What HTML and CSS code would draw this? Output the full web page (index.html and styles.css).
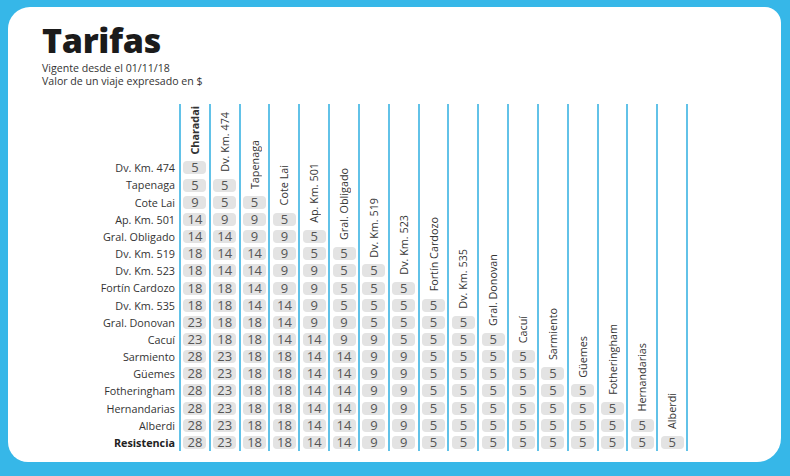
FILE: index.html
```html
<!DOCTYPE html>
<html lang="es">
<head>
<meta charset="utf-8">
<title>Tarifas</title>
<link rel="stylesheet" href="styles.css">
</head>
<body>
<div class="card">
  <h1 class="title">Tarifas</h1>
  <p class="sub">Vigente desde el 01/11/18<br>Valor de un viaje expresado en $</p>
  <div class="table">
    <div class="labels">
      <div class="lab">Dv. Km. 474</div>
      <div class="lab">Tapenaga</div>
      <div class="lab">Cote Lai</div>
      <div class="lab">Ap. Km. 501</div>
      <div class="lab">Gral. Obligado</div>
      <div class="lab">Dv. Km. 519</div>
      <div class="lab">Dv. Km. 523</div>
      <div class="lab">Fortín Cardozo</div>
      <div class="lab">Dv. Km. 535</div>
      <div class="lab">Gral. Donovan</div>
      <div class="lab">Cacuí</div>
      <div class="lab">Sarmiento</div>
      <div class="lab">Güemes</div>
      <div class="lab">Fotheringham</div>
      <div class="lab">Hernandarias</div>
      <div class="lab">Alberdi</div>
      <div class="lab bold">Resistencia</div>
    </div>
    <div class="col"><div class="head"><span class="bold">Charadai</span></div>
      <div class="c"><span>5</span></div><div class="c"><span>5</span></div><div class="c"><span>9</span></div><div class="c"><span>14</span></div><div class="c"><span>14</span></div><div class="c"><span>18</span></div><div class="c"><span>18</span></div><div class="c"><span>18</span></div><div class="c"><span>18</span></div><div class="c"><span>23</span></div><div class="c"><span>23</span></div><div class="c"><span>28</span></div><div class="c"><span>28</span></div><div class="c"><span>28</span></div><div class="c"><span>28</span></div><div class="c"><span>28</span></div><div class="c"><span>28</span></div>
    </div>
    <div class="col"><div class="head"><span>Dv. Km. 474</span></div>
      <div class="c"><span>5</span></div><div class="c"><span>5</span></div><div class="c"><span>9</span></div><div class="c"><span>14</span></div><div class="c"><span>14</span></div><div class="c"><span>14</span></div><div class="c"><span>18</span></div><div class="c"><span>18</span></div><div class="c"><span>18</span></div><div class="c"><span>18</span></div><div class="c"><span>23</span></div><div class="c"><span>23</span></div><div class="c"><span>23</span></div><div class="c"><span>23</span></div><div class="c"><span>23</span></div><div class="c"><span>23</span></div>
    </div>
    <div class="col"><div class="head"><span>Tapenaga</span></div>
      <div class="c"><span>5</span></div><div class="c"><span>9</span></div><div class="c"><span>9</span></div><div class="c"><span>14</span></div><div class="c"><span>14</span></div><div class="c"><span>14</span></div><div class="c"><span>14</span></div><div class="c"><span>18</span></div><div class="c"><span>18</span></div><div class="c"><span>18</span></div><div class="c"><span>18</span></div><div class="c"><span>18</span></div><div class="c"><span>18</span></div><div class="c"><span>18</span></div><div class="c"><span>18</span></div>
    </div>
    <div class="col"><div class="head"><span>Cote Lai</span></div>
      <div class="c"><span>5</span></div><div class="c"><span>9</span></div><div class="c"><span>9</span></div><div class="c"><span>9</span></div><div class="c"><span>9</span></div><div class="c"><span>14</span></div><div class="c"><span>14</span></div><div class="c"><span>14</span></div><div class="c"><span>18</span></div><div class="c"><span>18</span></div><div class="c"><span>18</span></div><div class="c"><span>18</span></div><div class="c"><span>18</span></div><div class="c"><span>18</span></div>
    </div>
    <div class="col"><div class="head"><span>Ap. Km. 501</span></div>
      <div class="c"><span>5</span></div><div class="c"><span>5</span></div><div class="c"><span>9</span></div><div class="c"><span>9</span></div><div class="c"><span>9</span></div><div class="c"><span>9</span></div><div class="c"><span>14</span></div><div class="c"><span>14</span></div><div class="c"><span>14</span></div><div class="c"><span>14</span></div><div class="c"><span>14</span></div><div class="c"><span>14</span></div><div class="c"><span>14</span></div>
    </div>
    <div class="col"><div class="head"><span>Gral. Obligado</span></div>
      <div class="c"><span>5</span></div><div class="c"><span>5</span></div><div class="c"><span>5</span></div><div class="c"><span>5</span></div><div class="c"><span>9</span></div><div class="c"><span>9</span></div><div class="c"><span>14</span></div><div class="c"><span>14</span></div><div class="c"><span>14</span></div><div class="c"><span>14</span></div><div class="c"><span>14</span></div><div class="c"><span>14</span></div>
    </div>
    <div class="col"><div class="head"><span>Dv. Km. 519</span></div>
      <div class="c"><span>5</span></div><div class="c"><span>5</span></div><div class="c"><span>5</span></div><div class="c"><span>5</span></div><div class="c"><span>9</span></div><div class="c"><span>9</span></div><div class="c"><span>9</span></div><div class="c"><span>9</span></div><div class="c"><span>9</span></div><div class="c"><span>9</span></div><div class="c"><span>9</span></div>
    </div>
    <div class="col"><div class="head"><span>Dv. Km. 523</span></div>
      <div class="c"><span>5</span></div><div class="c"><span>5</span></div><div class="c"><span>5</span></div><div class="c"><span>5</span></div><div class="c"><span>9</span></div><div class="c"><span>9</span></div><div class="c"><span>9</span></div><div class="c"><span>9</span></div><div class="c"><span>9</span></div><div class="c"><span>9</span></div>
    </div>
    <div class="col"><div class="head"><span>Fortín Cardozo</span></div>
      <div class="c"><span>5</span></div><div class="c"><span>5</span></div><div class="c"><span>5</span></div><div class="c"><span>5</span></div><div class="c"><span>5</span></div><div class="c"><span>5</span></div><div class="c"><span>5</span></div><div class="c"><span>5</span></div><div class="c"><span>5</span></div>
    </div>
    <div class="col"><div class="head"><span>Dv. Km. 535</span></div>
      <div class="c"><span>5</span></div><div class="c"><span>5</span></div><div class="c"><span>5</span></div><div class="c"><span>5</span></div><div class="c"><span>5</span></div><div class="c"><span>5</span></div><div class="c"><span>5</span></div><div class="c"><span>5</span></div>
    </div>
    <div class="col"><div class="head"><span>Gral. Donovan</span></div>
      <div class="c"><span>5</span></div><div class="c"><span>5</span></div><div class="c"><span>5</span></div><div class="c"><span>5</span></div><div class="c"><span>5</span></div><div class="c"><span>5</span></div><div class="c"><span>5</span></div>
    </div>
    <div class="col"><div class="head"><span>Cacuí</span></div>
      <div class="c"><span>5</span></div><div class="c"><span>5</span></div><div class="c"><span>5</span></div><div class="c"><span>5</span></div><div class="c"><span>5</span></div><div class="c"><span>5</span></div>
    </div>
    <div class="col"><div class="head"><span>Sarmiento</span></div>
      <div class="c"><span>5</span></div><div class="c"><span>5</span></div><div class="c"><span>5</span></div><div class="c"><span>5</span></div><div class="c"><span>5</span></div>
    </div>
    <div class="col"><div class="head"><span>Güemes</span></div>
      <div class="c"><span>5</span></div><div class="c"><span>5</span></div><div class="c"><span>5</span></div><div class="c"><span>5</span></div>
    </div>
    <div class="col"><div class="head"><span>Fotheringham</span></div>
      <div class="c"><span>5</span></div><div class="c"><span>5</span></div><div class="c"><span>5</span></div>
    </div>
    <div class="col"><div class="head"><span>Hernandarias</span></div>
      <div class="c"><span>5</span></div><div class="c"><span>5</span></div>
    </div>
    <div class="col last"><div class="head"><span>Alberdi</span></div>
      <div class="c"><span>5</span></div>
    </div>
  </div>
</div>
</body>
</html>
```
FILE: styles.css
```css
* { box-sizing: border-box; }
html, body { margin: 0; padding: 0; }
body {
  width: 790px;
  height: 476px;
  background: #36b7e8;
  font-family: "Open Sans", "Noto Sans", sans-serif;
  color: #333;
  padding: 7px 9px 14px 8px;
}
.card {
  background: #fff;
  width: 773px;
  height: 455px;
  border-radius: 22px 16px 24px 20px;
  padding: 14.5px 0 0 34px;
}
.title {
  margin: 0;
  font-size: 34px;
  line-height: 36px;
  font-weight: 800;
  color: #1b1b1b;
  letter-spacing: -0.3px;
}
.sub {
  margin: 4.7px 0 0 0;
  font-size: 10.6px;
  line-height: 12.5px;
  color: #333;
}
.table {
  display: flex;
  margin-top: 16.8px;
  height: 347px;
}
.labels {
  width: 137px;
  padding-right: 4px;
  display: flex;
  flex-direction: column;
  justify-content: flex-end;
}
.lab {
  height: 17.16px;
  line-height: 17.16px;
  text-align: right;
  font-size: 10.8px;
  color: #333;
  white-space: nowrap;
}
.bold { font-weight: 700; color: #222; }
.col {
  width: 29.84px;
  border-left: 2px solid #62c2e8;
  display: flex;
  flex-direction: column;
}
.col.last {
  width: 31.84px;
  border-right: 2px solid #62c2e8;
}
.head {
  flex: 1;
  display: flex;
  align-items: flex-end;
  justify-content: center;
  padding-bottom: 5px;
}
.head span {
  writing-mode: vertical-rl;
  transform: rotate(180deg);
  font-size: 10.8px;
  line-height: 14px;
  color: #333;
  white-space: nowrap;
}
.c {
  height: 17.16px;
  display: flex;
  align-items: center;
  justify-content: center;
}
.c span {
  width: 23px;
  height: 13px;
  border-radius: 4px;
  background: #e3e3e3;
  color: #555;
  font-size: 13px;
  line-height: 13px;
  text-align: center;
}
```
